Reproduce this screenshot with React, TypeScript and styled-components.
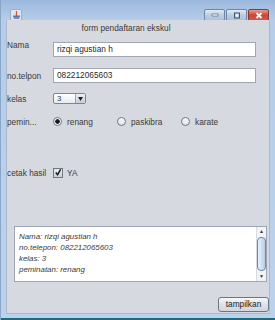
import React from 'react'
import styled, { createGlobalStyle } from 'styled-components'

const Global = createGlobalStyle`
  html, body { margin: 0; padding: 0; background: #ffffff; }
  body { font-family: "Liberation Sans", Arial, sans-serif; }
`

export default function App() {
  return (
    <>
      <Global />
      <Frame>
        <TitleBar>
          <AppIcon>
            <svg width="9" height="9" viewBox="0 0 9 9">
              <path d="M4 0 C6 2 3 3 5 5" stroke="#e0502a" strokeWidth="1.2" fill="none" />
              <path d="M1 5 L8 5 L7 8 L2 8 Z" fill="#6a8fc0" />
              <path d="M1 5 L8 5" stroke="#3a5f90" strokeWidth="0.8" />
            </svg>
          </AppIcon>
          <Controls>
            <CtlButton>
              <svg width="8" height="4"><rect x="1" y="1" width="6" height="2" fill="#fff" stroke="#44526a" strokeWidth="0.6" /></svg>
            </CtlButton>
            <CtlButton>
              <svg width="8" height="7"><rect x="1.5" y="1" width="5" height="5" fill="none" stroke="#44526a" strokeWidth="1" /><rect x="3" y="2.5" width="2" height="2" fill="#fff" /></svg>
            </CtlButton>
            <CtlButton $close>
              <svg width="8" height="7"><path d="M1.5 1 L6.5 6 M6.5 1 L1.5 6" stroke="#fff" strokeWidth="1.8" /></svg>
            </CtlButton>
          </Controls>
        </TitleBar>
        <Content>
          <Heading>form pendaftaran ekskul</Heading>
          <Row $top={7} $h={15}>
            <Label $raise>Nama</Label>
            <TextField>rizqi agustian h</TextField>
          </Row>
          <Row $top={11} $h={15}>
            <Label>no.telpon</Label>
            <TextField>082212065603</TextField>
          </Row>
          <Row $top={10} $h={11}>
            <Label>kelas</Label>
            <Combo>
              <ComboValue>3</ComboValue>
              <ComboArrow>
                <svg width="5" height="4"><path d="M0 0 L5 0 L2.5 4 Z" fill="#222" /></svg>
              </ComboArrow>
            </Combo>
          </Row>
          <Row $top={12} $h={11}>
            <Label>pemin...</Label>
            <Radios>
              <Radio><RadioDot $on />renang</Radio>
              <Radio><RadioDot />paskibra</Radio>
              <Radio><RadioDot />karate</Radio>
            </Radios>
          </Row>
          <Row $top={40} $h={11}>
            <Label>cetak hasil</Label>
            <Radio>
              <CheckBox>
                <svg width="9" height="9" viewBox="0 0 9 9"><path d="M2 4.5 L4 7 L7.5 1" stroke="#1a1a1a" strokeWidth="1.6" fill="none" /></svg>
              </CheckBox>
              YA
            </Radio>
          </Row>
          <TextArea>
            <AreaText>
              <div>Nama: rizqi agustian h</div>
              <div>no.telepon: 082212065603</div>
              <div>kelas: 3</div>
              <div>peminatan: renang</div>
            </AreaText>
            <ScrollBar>
              <ScrollArrow>▲</ScrollArrow>
              <Thumb />
              <ScrollArrow>▼</ScrollArrow>
            </ScrollBar>
          </TextArea>
          <Footer>
            <PushButton>tampilkan</PushButton>
          </Footer>
        </Content>
        <BottomEdge />
      </Frame>
    </>
  )
}

const Frame = styled.div`
  width: 275px;
  height: 320px;
  display: flex;
  flex-direction: column;
  background: linear-gradient(to bottom, #9ab8dd 0px, #b6cde9 20px, #bcd2ec 100%);
  border-left: 1px solid #8aa6c8;
  box-sizing: border-box;
  overflow: hidden;
`

const TitleBar = styled.div`
  height: 20px;
  flex: none;
  display: flex;
  align-items: flex-start;
  justify-content: space-between;
  padding: 9px 6px 0 9px;
  box-sizing: border-box;
`

const AppIcon = styled.div`
  width: 10px;
  height: 10px;
  display: flex;
  align-items: center;
  justify-content: center;
  background: #dfe6ef;
  border: 1px solid #9fb0c6;
  border-radius: 2px;
`

const Controls = styled.div`
  display: flex;
  gap: 1px;
`

const CtlButton = styled.div<{ $close?: boolean }>`
  width: 19px;
  height: 10px;
  display: flex;
  align-items: center;
  justify-content: center;
  border: 1px solid ${p => (p.$close ? '#8a3a30' : '#6f86a6')};
  border-radius: 2px;
  background: ${p =>
    p.$close
      ? 'linear-gradient(to bottom, #e8a090, #c9463a 50%, #d05a48)'
      : 'linear-gradient(to bottom, #e2ebf5, #bccde2 50%, #adc2dc)'};
`

const Content = styled.div`
  height: 294px;
  flex: none;
  box-sizing: border-box;
  margin: 0 5px;
  background: #d6d9df;
  display: flex;
  flex-direction: column;
  border: 1px solid #a9bad0;
  border-top: none;
  font-size: 8.3px;
  color: #3a3a3a;
`

const Heading = styled.div`
  height: 13px;
  line-height: 13px;
  margin-top: 2px;
  text-align: center;
  padding-right: 24px;
`

const Row = styled.div<{ $top: number; $h: number }>`
  display: flex;
  align-items: center;
  margin-top: ${p => p.$top}px;
  height: ${p => p.$h}px;
`

const Label = styled.div<{ $raise?: boolean }>`
  width: 46px;
  flex: none;
  position: relative;
  top: ${p => (p.$raise ? -5 : 0)}px;
  white-space: nowrap;
`

const TextField = styled.div`
  width: 203px;
  height: 15px;
  box-sizing: border-box;
  background: #ffffff;
  border: 1px solid #a0a7b2;
  padding-left: 3px;
  line-height: 13px;
  color: #2a2a2a;
`

const Combo = styled.div`
  width: 33px;
  height: 11px;
  box-sizing: border-box;
  display: flex;
  border: 1px solid #7b8595;
  border-radius: 2px;
  background: linear-gradient(to bottom, #ffffff, #e6eaf0);
`

const ComboValue = styled.div`
  flex: 1;
  font-size: 8px;
  line-height: 9px;
  padding-left: 3px;
`

const ComboArrow = styled.div`
  width: 9px;
  display: flex;
  align-items: center;
  justify-content: center;
  border-left: 1px solid #9aa3b0;
  background: linear-gradient(to bottom, #eef2f7, #c3ccd8);
`

const Radios = styled.div`
  display: flex;
`

const Radio = styled.div`
  display: flex;
  align-items: center;
  gap: 5px;
  width: 64px;
  white-space: nowrap;
`

const RadioDot = styled.span<{ $on?: boolean }>`
  width: 9px;
  height: 9px;
  box-sizing: border-box;
  border-radius: 50%;
  border: 1px solid #6f7784;
  background: ${p =>
    p.$on
      ? 'radial-gradient(circle, #1a1a1a 0 2px, #f4f6f9 2.5px)'
      : 'linear-gradient(to bottom, #fafbfc, #e0e4ea)'};
  flex: none;
`

const CheckBox = styled.span`
  width: 10px;
  height: 10px;
  box-sizing: border-box;
  border: 1px solid #6f7784;
  background: linear-gradient(to bottom, #e8edf3, #c6cfdb);
  display: flex;
  align-items: center;
  justify-content: center;
  flex: none;
  margin-right: -1px;
`

const TextArea = styled.div`
  margin: 48px 2px 0 7px;
  height: 56px;
  flex: none;
  box-sizing: border-box;
  background: #ffffff;
  border: 1px solid #9ea6b2;
  display: flex;
`

const AreaText = styled.div`
  flex: 1;
  padding: 4px 0 0 4px;
  font-style: italic;
  font-size: 7.9px;
  line-height: 11px;
  color: #3a3a3a;
`

const ScrollBar = styled.div`
  width: 9px;
  display: flex;
  flex-direction: column;
  background: #f2f3f5;
  border-left: 1px solid #d7dadf;
`

const ScrollArrow = styled.div`
  height: 9px;
  font-size: 5px;
  line-height: 9px;
  text-align: center;
  color: #333;
`

const Thumb = styled.div`
  flex: 1;
  margin: 1px 0;
  border: 1px solid #6f86a6;
  border-radius: 4px;
  background: linear-gradient(to right, #e8f1fb, #b7cde7);
`

const Footer = styled.div`
  flex: 1;
  display: flex;
  justify-content: flex-end;
  align-items: flex-end;
  padding-bottom: 1px;
`

const PushButton = styled.div`
  width: 51px;
  height: 15px;
  box-sizing: border-box;
  border: 1px solid #6c7585;
  border-radius: 3px;
  background: linear-gradient(to bottom, #f6f8fa, #dde2e9 50%, #cfd6df);
  line-height: 13px;
  text-align: center;
  color: #222;
`

const BottomEdge = styled.div`
  flex: 1;
  border-bottom: 2px solid #1e6b7d;
`
